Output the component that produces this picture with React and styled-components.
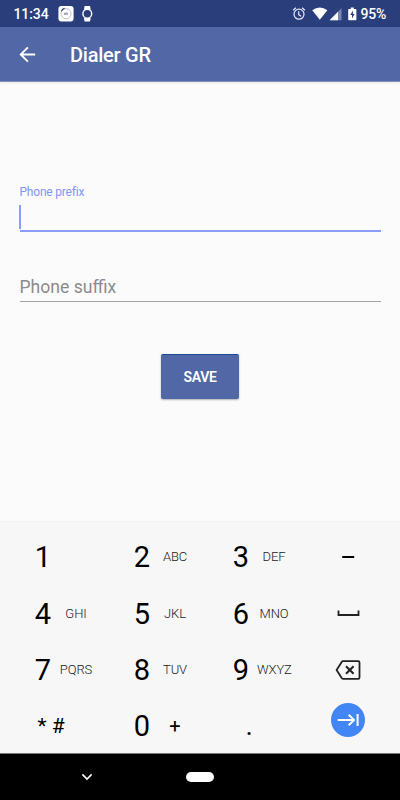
import React from 'react';
import styled, { createGlobalStyle } from 'styled-components';

const keys = [
    { digit: '1' },
    { digit: '2', letters: 'ABC' },
    { digit: '3', letters: 'DEF' },
    { icon: 'dash' },
    { digit: '4', letters: 'GHI' },
    { digit: '5', letters: 'JKL' },
    { digit: '6', letters: 'MNO' },
    { icon: 'space' },
    { digit: '7', letters: 'PQRS' },
    { digit: '8', letters: 'TUV' },
    { digit: '9', letters: 'WXYZ' },
    { icon: 'backspace' },
    { symbols: '* #' },
    { digit: '0', plus: true },
    { dot: true },
    { icon: 'next' },
];

const KeyIcon = ({ name }) => {
    if (name === 'dash') {
        return (
            <svg width="34" height="34" viewBox="0 0 34 34">
                <path d="M11.2 17h12" stroke="#000" strokeWidth="2" />
            </svg>
        );
    }
    if (name === 'space') {
        return (
            <svg width="34" height="34" viewBox="0 0 34 34" fill="none">
                <path d="M7.5 13.4v4.6h20v-4.6" stroke="#222" strokeWidth="1.8" />
            </svg>
        );
    }
    if (name === 'backspace') {
        return (
            <svg width="34" height="34" viewBox="0 0 34 34" fill="none" stroke="#222" strokeWidth="1.8">
                <path d="M12 8.2h15.2q1.3 0 1.3 1.3v15q0 1.3-1.3 1.3H12q-.8 0-1.3-.7L5.6 17l5.1-8.1q.5-.7 1.3-.7z" />
                <path d="M15 13.2l7.6 7.6M22.6 13.2l-7.6 7.6" strokeWidth="2" />
            </svg>
        );
    }
    return (
        <NextButton>
            <svg width="34" height="34" viewBox="0 0 34 34" fill="none" stroke="#fff" strokeWidth="2">
                <path d="M6.7 17h16M17.7 11.7L23 17l-5.3 5.3M26.6 11v12" />
            </svg>
        </NextButton>
    );
};

const App = () => (
    <Screen>
        <GlobalStyle />
        <StatusBar>
            <Clock>11:34</Clock>
            <svg width="36" height="18" viewBox="0 0 36 18">
                <rect x="0.4" y="1" width="15.2" height="15.4" rx="3" fill="#fff" />
                <circle cx="8" cy="8.7" r="5.1" fill="none" stroke="#b3b8c9" strokeWidth="0.9" />
                <path d="M3.3 6.2Q4.3 3.9 6.6 3.4" fill="none" stroke="#33406f" strokeWidth="1.1" />
                <rect x="6" y="7.4" width="4" height="2.6" rx="0.5" fill="#a5abbd" />
                <path d="M26.6 1h5.4l.7 3.4h-6.8zM25.9 13h6.8l-.7 3.4h-5.4z" fill="#fff" />
                <circle cx="29.3" cy="8.7" r="4.4" fill="none" stroke="#fff" strokeWidth="1.4" />
            </svg>
            <StatusRight>
                <svg width="66" height="18" viewBox="0 0 66 18">
                    <g fill="none" stroke="#e6e9f5" strokeWidth="1.2">
                        <circle cx="7" cy="9.2" r="5" />
                        <path d="M1.1 5.2L3.9 2.7M12.9 5.2L10.1 2.7M6.7 6.2v3.4l2.4 1.6" />
                    </g>
                    <path d="M20.2 5.2Q27.8-.2 35.4 5.2L27.8 14.8z" fill="#fff" />
                    <path d="M49.5 3.3v11.9H37.6z" fill="#7886b5" />
                    <path d="M46 6.8v8.4h-8.4z" fill="#fff" />
                    <path d="M58.8 2.6h3v1.3h2q.6 0 .6.6v10.1q0 .6-.6.6h-7q-.6 0-.6-.6V4.5q0-.6.6-.6h2z" fill="#fff" />
                    <path d="M60.9 5.6L58.3 10h1.7v3.4L62.5 9h-1.6z" fill="#2a3e7b" />
                </svg>
                <Battery>95%</Battery>
            </StatusRight>
        </StatusBar>
        <Toolbar>
            <svg width="20" height="18" viewBox="0 0 20 18" fill="none" stroke="#fff" strokeWidth="1.8">
                <path d="M17.2 9.5H2.7M9.9 2.3L2.7 9.5l7.2 7.2" />
            </svg>
            <Title>Dialer GR</Title>
        </Toolbar>
        <Form>
            <Label>Phone prefix</Label>
            <Field $active>
                <Caret />
            </Field>
            <Field>
                <Placeholder>Phone suffix</Placeholder>
            </Field>
            <SaveButton>SAVE</SaveButton>
        </Form>
        <Keypad>
            {keys.map((key, i) => (
                <Key key={i} $center={!!key.icon} $raised={key.icon === 'next'}>
                    {key.icon && <KeyIcon name={key.icon} />}
                    {key.digit && <Digit>{key.digit}</Digit>}
                    {key.letters && <Letters>{key.letters}</Letters>}
                    {key.plus && <Plus>+</Plus>}
                    {key.symbols && <Symbols>{key.symbols}</Symbols>}
                    {key.dot && <Dot>.</Dot>}
                </Key>
            ))}
        </Keypad>
        <NavBar>
            <svg width="12" height="8" viewBox="0 0 12 8" fill="none" stroke="#fff" strokeWidth="1.6">
                <path d="M1.4 1.4L6 6l4.6-4.6" />
            </svg>
            <HomePill />
        </NavBar>
    </Screen>
);

export default App;

const GlobalStyle = createGlobalStyle`
    * {
        box-sizing: border-box;
    }

    body {
        margin: 0;
        font-family: Roboto, sans-serif;
    }

    svg {
        display: block;
        flex-shrink: 0;
    }
`;

const Screen = styled.div`
    display: flex;
    flex-direction: column;
    width: 400px;
    height: 800px;
    overflow: hidden;
    background: #fbfbfb;
`;

const StatusBar = styled.div`
    display: flex;
    align-items: center;
    height: 27px;
    padding: 0 14px 0 13.5px;
    background: #2a3e7b;
    color: #fff;
`;

const Clock = styled.span`
    width: 44.5px;
    font-size: 14px;
    font-weight: 500;
    letter-spacing: -0.1px;
    line-height: 18px;
    padding-top: 1px;
`;

const StatusRight = styled.div`
    display: flex;
    align-items: center;
    margin-left: auto;
`;

const Battery = styled.span`
    width: 25.5px;
    margin-left: 2.5px;
    font-size: 14px;
    font-weight: 500;
    letter-spacing: -0.2px;
    line-height: 18px;
    padding-top: 1px;
    white-space: nowrap;
`;

const Toolbar = styled.header`
    display: flex;
    align-items: center;
    height: 55px;
    padding: 0 18px;
    background: #5267a5;
    border-bottom: 1px solid #8591bc;
    box-shadow: 0 1px 2px rgba(0, 0, 0, 0.08);
`;

const Title = styled.h1`
    margin: 2px 0 0 32px;
    color: #fff;
    font-size: 20px;
    font-weight: 500;
    letter-spacing: -0.25px;
    line-height: 24px;
`;

const Form = styled.div`
    display: flex;
    flex-direction: column;
    height: 439px;
    padding: 102px 19.5px 0;
`;

const Label = styled.label`
    color: #8295f8;
    font-size: 12px;
    letter-spacing: -0.2px;
    line-height: 16px;
`;

const Field = styled.div`
    display: flex;
    align-items: flex-start;
    height: ${({ $active }) => ($active ? '32px' : '31px')};
    margin-bottom: ${({ $active }) => ($active ? '39px' : '52px')};
    padding-top: 5px;
    border-bottom: ${({ $active }) => ($active ? '2px solid #8c9df9' : '1px solid #a3a3a3')};
`;

const Caret = styled.span`
    width: 2px;
    height: 24px;
    margin-left: -0.5px;
    background: #8b9dfc;
`;

const Placeholder = styled.span`
    color: #8b8b8b;
    font-size: 17.6px;
    line-height: 22px;
`;

const SaveButton = styled.button`
    align-self: center;
    width: 78px;
    height: 45px;
    padding: 0;
    border: 0;
    border-top: 1px solid #1c4a9c;
    border-radius: 2px;
    background: #5267a5;
    box-shadow: 0 1px 2px rgba(0, 0, 0, 0.3);
    color: #fff;
    font-family: inherit;
    font-size: 14px;
    font-weight: 600;
    letter-spacing: -0.3px;
`;

const Keypad = styled.div`
    display: grid;
    grid-template-columns: 99px 99px 99px 84px;
    grid-auto-rows: 56.4px;
    height: 232px;
    padding: 7px 10px 0 9px;
    border-top: 1px solid #f0f0f0;
    background: #f7f7f7;
    color: #000;
`;

const Key = styled.div`
    display: flex;
    align-items: center;
    justify-content: ${({ $center }) => ($center ? 'center' : 'flex-start')};
    padding-left: ${({ $center }) => ($center ? '0' : '18px')};
    padding-bottom: ${({ $raised }) => ($raised ? '12px' : '0')};
`;

const Digit = styled.span`
    width: 32px;
    font-size: 29px;
    line-height: 34px;
    text-align: center;
`;

const Letters = styled.span`
    width: 34px;
    color: #222;
    font-size: 13px;
    font-weight: 300;
    letter-spacing: -0.1px;
    line-height: 16px;
    text-align: center;
    white-space: nowrap;
`;

const Plus = styled.span`
    width: 34px;
    font-size: 20px;
    line-height: 24px;
    text-align: center;
`;

const Symbols = styled.span`
    margin-left: 10.5px;
    font-size: 21px;
    line-height: 24px;
`;

const Dot = styled.span`
    margin-left: 20.5px;
    font-size: 28px;
    line-height: 34px;
`;

const NextButton = styled.div`
    display: flex;
    align-items: center;
    justify-content: center;
    width: 34px;
    height: 34px;
    border-radius: 50%;
    background: #4285f4;
`;

const NavBar = styled.div`
    display: flex;
    align-items: center;
    height: 47px;
    padding-left: 81px;
    border-top: 1px solid #777;
    background: #000;
`;

const HomePill = styled.span`
    width: 28px;
    height: 10px;
    margin-left: 93px;
    border-radius: 5px;
    background: #fff;
`;
